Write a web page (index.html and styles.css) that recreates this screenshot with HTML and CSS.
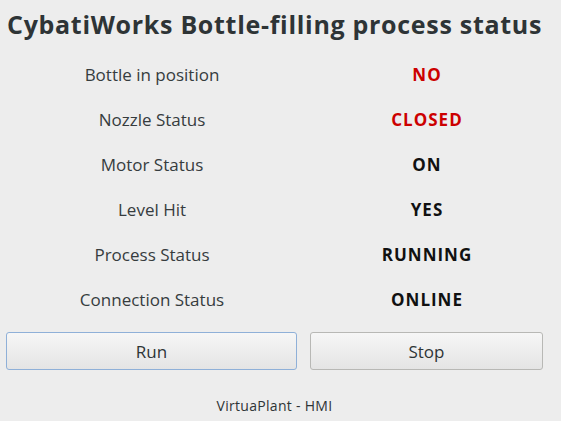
FILE: index.html
```html
<!DOCTYPE html>
<html lang="en">

<head>
  <meta charset="UTF-8">
  <meta name="viewport" content="width=device-width, initial-scale=1.0">
  <title>VirtuaPlant - HMI</title>
  <link rel="stylesheet" href="styles.css">
</head>

<body>

  <div class="window">
    <h1>CybatiWorks Bottle-filling process status</h1>

    <div class="status-grid">
      <div class="label">Bottle in position</div>
      <div class="value alarm">NO</div>

      <div class="label">Nozzle Status</div>
      <div class="value alarm">CLOSED</div>

      <div class="label">Motor Status</div>
      <div class="value">ON</div>

      <div class="label">Level Hit</div>
      <div class="value">YES</div>

      <div class="label">Process Status</div>
      <div class="value">RUNNING</div>

      <div class="label">Connection Status</div>
      <div class="value">ONLINE</div>
    </div>

    <div class="buttons">
      <button class="btn focused">Run</button>
      <button class="btn">Stop</button>
    </div>

    <div class="footer">VirtuaPlant - HMI</div>
  </div>

</body>

</html>
```

FILE: styles.css
```css
html,
body {
  margin: 0;
  padding: 0;
  background-color: #ededed;
}

body {
  font-family: "Open Sans", "DejaVu Sans", sans-serif;
  color: #2e3436;
}

.window {
  width: 561px;
  height: 421px;
}

h1 {
  margin: 0;
  padding: 7px 0 0 7px;
  height: 45px;
  line-height: 34px;
  font-size: 25px;
  font-weight: bold;
  letter-spacing: 0.7px;
  color: #2e3436;
  white-space: nowrap;
}

.status-grid {
  display: grid;
  grid-template-columns: 304px 246px;
  grid-auto-rows: 45px;
}

.label,
.value {
  display: flex;
  align-items: center;
  justify-content: center;
  font-size: 17px;
}

.label {
  color: #363c3e;
}

.value {
  font-weight: bold;
  letter-spacing: 1px;
  color: #111;
}

.value.alarm {
  color: #cc0000;
}

.buttons {
  display: grid;
  grid-template-columns: 304px 246px;
  margin-top: 10px;
}

.btn {
  height: 38px;
  margin: 0 7px 0 6px;
  font-family: inherit;
  font-size: 17px;
  color: #2e3436;
  background: linear-gradient(#f6f6f6, #e4e4e4);
  border: 1px solid #b8b8b5;
  border-radius: 3px;
}

.btn.focused {
  border-color: #8fb0d8;
}

.footer {
  margin-top: 26px;
  padding-right: 12px;
  text-align: center;
  font-size: 14px;
  letter-spacing: 0.3px;
  color: #2e3436;
}
```
